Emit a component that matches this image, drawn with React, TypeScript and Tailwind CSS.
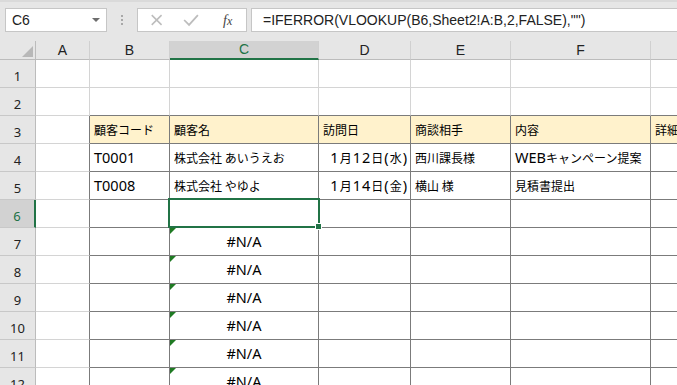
import React from "react";

const COLS = [
  { key: "A", w: 54, label: "A" },
  { key: "B", w: 80, label: "B" },
  { key: "C", w: 149, label: "C" },
  { key: "D", w: 92, label: "D" },
  { key: "E", w: 100, label: "E" },
  { key: "F", w: 140, label: "F" },
  { key: "G", w: 40, label: "" },
];

const JP = "font-['Noto_Sans_CJK_JP',sans-serif] text-[12px]";

type CellSpec = { content?: React.ReactNode; align?: "left" | "right" | "center" };

const L = ({ children }: { children: React.ReactNode }) => (
  <span className="font-['Noto_Sans',sans-serif] text-[14.5px]">{children}</span>
);

const data: Record<number, Record<string, CellSpec>> = {
  3: {
    B: { content: "顧客コード" },
    C: { content: "顧客名" },
    D: { content: "訪問日" },
    E: { content: "商談相手" },
    F: { content: "内容" },
    G: { content: "詳細" },
  },
  4: {
    B: { content: <L>T0001</L> },
    C: { content: "株式会社 あいうえお" },
    D: {
      content: (
        <span className="tracking-[1px]">
          <L>1</L>月<L>12</L>日<L>(</L>水<L>)</L>
        </span>
      ),
      align: "right",
    },
    E: { content: "西川課長様" },
    F: {
      content: (
        <>
          <L>WEB</L>キャンペーン提案
        </>
      ),
    },
  },
  5: {
    B: { content: <L>T0008</L> },
    C: { content: "株式会社 やゆよ" },
    D: {
      content: (
        <span className="tracking-[1px]">
          <L>1</L>月<L>14</L>日<L>(</L>金<L>)</L>
        </span>
      ),
      align: "right",
    },
    E: { content: "横山 様" },
    F: { content: "見積書提出" },
  },
};

for (let r = 7; r <= 12; r++) {
  data[r] = { C: { content: <L>#N/A</L>, align: "center" } };
}

const ROWS = [1, 2, 3, 4, 5, 6, 7, 8, 9, 10, 11, 12];
const TABLE_COLS = ["B", "C", "D", "E", "F", "G"];

function Cell({ row, col, w }: { row: number; col: string; w: number }) {
  const inTable = row >= 3 && TABLE_COLS.includes(col);
  const spec = data[row]?.[col];
  const darkRight = inTable || (col === "A" && row >= 3);
  const darkBottom = inTable || (row === 2 && TABLE_COLS.includes(col));
  const bg = row === 3 && inTable ? "bg-[#fff2cc]" : "bg-white";
  const justify =
    spec?.align === "right"
      ? "justify-end pr-[2px]"
      : spec?.align === "center"
      ? "justify-center"
      : "justify-start pl-[4px]";
  const showTri = col === "C" && row >= 7;
  return (
    <div
      className={`relative shrink-0 h-[28px] flex items-center overflow-hidden whitespace-nowrap border-r border-b ${
        darkRight ? "border-r-[#7b7b7b]" : "border-r-[#d4d4d4]"
      } ${darkBottom ? "border-b-[#7b7b7b]" : "border-b-[#d4d4d4]"} ${bg} ${justify} ${JP} text-black`}
      style={{ width: w }}
    >
      {showTri && (
        <div className="absolute left-0 top-0 w-0 h-0 border-t-[6px] border-t-[#1f7a23] border-r-[6px] border-r-transparent" />
      )}
      {spec?.content}
    </div>
  );
}

export default function App() {
  return (
    <div className="relative w-[677px] h-[385px] overflow-hidden bg-[#e6e6e6] font-['Liberation_Sans',sans-serif]">
      {/* Toolbar */}
      <div className="relative h-[41px] flex items-start pt-[6px] border-t-[2px] border-t-[#dadada]">
        <div className="ml-[5px] w-[102px] h-[24px] bg-white border border-[#c6c6c6] flex items-center justify-between pl-[6px] pr-[6px]">
          <span className="text-[14px] text-[#222] font-['Liberation_Sans',sans-serif]">C6</span>
          <span className="w-0 h-0 border-l-[4px] border-r-[4px] border-t-[4px] border-l-transparent border-r-transparent border-t-[#6d6d6d]" />
        </div>
        <div className="w-[30px] h-[24px] flex flex-col items-center justify-center gap-[2px]">
          <span className="w-[2px] h-[2px] bg-[#a8a8a8]" />
          <span className="w-[2px] h-[2px] bg-[#a8a8a8]" />
          <span className="w-[2px] h-[2px] bg-[#a8a8a8]" />
        </div>
        <div className="relative w-[110px] h-[24px] bg-white border border-[#c6c6c6] flex items-center">
          <svg width="110" height="22" viewBox="0 0 110 22">
            <path d="M14 6 L24 16 M24 6 L14 16" stroke="#bdbdbd" strokeWidth="1.6" fill="none" />
            <path d="M47 11 L52 16 L61 6" stroke="#bdbdbd" strokeWidth="1.8" fill="none" />
          </svg>
          <span className="absolute left-[85px] top-[1px] text-[14px] italic text-[#444] font-['Liberation_Serif',serif]">
            f<span className="text-[12px]">x</span>
          </span>
        </div>
        <div className="ml-[4px] flex-1 h-[24px] bg-white border border-[#c6c6c6] border-r-0 flex items-center pl-[11px]">
          <span className="text-[14px] text-[#222] font-['Liberation_Sans',sans-serif] whitespace-nowrap">
            =IFERROR(VLOOKUP(B6,Sheet2!A:B,2,FALSE),"")
          </span>
        </div>
      </div>

      {/* Column headers */}
      <div className="flex h-[19px]">
        <div className="relative shrink-0 w-[36px] h-[19px] border-r border-b border-r-[#bcbcbc] border-b-[#bcbcbc] bg-[#e6e6e6]">
          <div className="absolute right-[2px] bottom-[2px] w-0 h-0 border-b-[11px] border-b-[#b8b8b8] border-l-[11px] border-l-transparent" />
        </div>
        {COLS.map((c) => {
          const sel = c.key === "C";
          return (
            <div
              key={c.key}
              className={`shrink-0 h-[19px] flex items-center justify-center border-r border-r-[#d0d0d0] text-[14px] font-['Liberation_Sans',sans-serif] ${
                sel
                  ? "bg-[#d2d2d2] text-[#217346] border-b-2 border-b-[#217346]"
                  : "bg-[#e6e6e6] text-[#222] border-b border-b-[#bcbcbc]"
              }`}
              style={{ width: c.w }}
            >
              {c.label}
            </div>
          );
        })}
      </div>

      {/* Rows */}
      {ROWS.map((r) => {
        const sel = r === 6;
        return (
          <div key={r} className="flex h-[28px]">
            <div
              className={`shrink-0 w-[36px] h-[28px] flex items-end justify-center pb-[1px] border-b border-b-[#c8c8c8] text-[13px] font-['Noto_Sans',sans-serif] ${
                sel
                  ? "bg-[#d2d2d2] text-[#217346] border-r-2 border-r-[#217346]"
                  : "bg-[#e6e6e6] text-[#222] border-r border-r-[#bcbcbc]"
              }`}
            >
              {r}
            </div>
            {COLS.map((c) => (
              <Cell key={c.key} row={r} col={c.key} w={c.w} />
            ))}
          </div>
        );
      })}

      {/* Selection overlay for C6 */}
      <div className="absolute left-[168px] top-[198px] w-[152px] h-[30px] border-2 border-[#217346] pointer-events-none" />
      <div className="absolute left-[315px] top-[223px] w-[7px] h-[7px] bg-[#217346] border border-white" />
    </div>
  );
}
